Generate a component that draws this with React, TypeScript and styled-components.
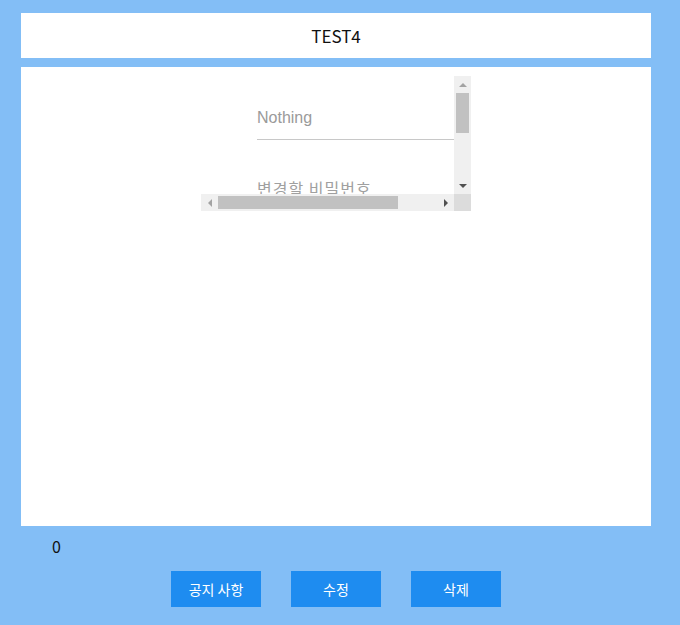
import styled, { createGlobalStyle } from "styled-components";

const GlobalStyle = createGlobalStyle`
  html, body {
    margin: 0;
    padding: 0;
    background-color: #83bef6;
    font-family: "Noto Sans CJK KR", "Open Sans", sans-serif;
  }
`;

const Page = styled.div`
  width: 630px;
  padding: 13px 29px 0 21px;
  display: flex;
  flex-direction: column;
`;

const TitleBar = styled.header`
  height: 45px;
  background-color: #fff;
  display: flex;
  align-items: center;
  justify-content: center;
  font-size: 17px;
  color: #111;
`;

const Board = styled.main`
  margin-top: 9px;
  height: 459px;
  background-color: #fff;
  display: flex;
  justify-content: center;
  padding-top: 9px;
  box-sizing: border-box;
`;

// scroll frame with classic scrollbars: view | v-bar / h-bar | corner
const ScrollFrame = styled.div`
  display: grid;
  grid-template-columns: 253px 17px;
  grid-template-rows: 118px 17px;
  width: 270px;
  height: 135px;
`;

const ScrollView = styled.div`
  overflow: hidden;
`;

const Bar = styled.div<{ $vertical?: boolean }>`
  display: flex;
  flex-direction: ${(p) => (p.$vertical ? "column" : "row")};
  background-color: #f0f0f0;
`;

const Track = styled.div<{ $vertical?: boolean }>`
  flex: 1;
  display: flex;
  flex-direction: ${(p) => (p.$vertical ? "column" : "row")};
  padding: ${(p) => (p.$vertical ? "0 2px" : "2px 0")};
`;

const Thumb = styled.div<{ $size: number; $vertical?: boolean }>`
  background-color: #c1c1c1;
  ${(p) => (p.$vertical ? `height: ${p.$size}px;` : `width: ${p.$size}px;`)}
  ${(p) => (p.$vertical ? "width: 13px;" : "height: 13px;")}
`;

const ArrowButton = styled.div`
  width: 17px;
  height: 17px;
  flex: none;
  display: flex;
  align-items: center;
  justify-content: center;
`;

type Dir = "up" | "down" | "left" | "right";

const Arrow = styled.span<{ $dir: Dir; $dim?: boolean }>`
  width: 0;
  height: 0;
  ${({ $dir, $dim }) => {
    const c = $dim ? "#a3a3a3" : "#505050";
    if ($dir === "up")
      return `border-left: 4px solid transparent; border-right: 4px solid transparent; border-bottom: 4px solid ${c};`;
    if ($dir === "down")
      return `border-left: 4px solid transparent; border-right: 4px solid transparent; border-top: 4px solid ${c};`;
    if ($dir === "left")
      return `border-top: 4px solid transparent; border-bottom: 4px solid transparent; border-right: 4px solid ${c};`;
    return `border-top: 4px solid transparent; border-bottom: 4px solid transparent; border-left: 4px solid ${c};`;
  }}
`;

const Corner = styled.div`
  background-color: #dcdcdc;
`;

const FormBody = styled.div`
  width: 308px;
  padding: 21px 0 20px 56px;
  box-sizing: border-box;
`;

const Field = styled.input`
  display: block;
  width: 252px;
  height: 42px;
  padding: 0;
  border: none;
  border-bottom: 1px solid #c8c8c8;
  outline: none;
  font-family: "Liberation Sans", Arial, sans-serif;
  font-size: 16px;
  color: #333;
  background: transparent;

  &::placeholder {
    color: #9a9a9a;
  }
`;

const FieldLabel = styled.label`
  display: block;
  margin-top: 36px;
  font-size: 16px;
  color: #a0a0a0;
  letter-spacing: 1px;
`;

const Counter = styled.div`
  height: 45px;
  padding: 0 0 6px 31px;
  box-sizing: border-box;
  display: flex;
  align-items: center;
  font-size: 16px;
  color: #111;
`;

const ButtonRow = styled.div`
  display: flex;
  justify-content: center;
  gap: 30px;
`;

const ActionButton = styled.button`
  width: 90px;
  height: 36px;
  border: none;
  background-color: #1e8cf0;
  color: #fff;
  font-family: "Noto Sans CJK KR", sans-serif;
  font-size: 14px;
  cursor: pointer;
`;

const App = () => {
  return (
    <>
      <GlobalStyle />
      <Page>
        <TitleBar>TEST4</TitleBar>
        <Board>
          <ScrollFrame>
            <ScrollView>
              <FormBody>
                <Field type="text" placeholder="Nothing" />
                <FieldLabel>변경할 비밀번호</FieldLabel>
                <Field type="password" />
              </FormBody>
            </ScrollView>
            <Bar $vertical>
              <ArrowButton>
                <Arrow $dir="up" $dim />
              </ArrowButton>
              <Track $vertical>
                <Thumb $vertical $size={40} />
              </Track>
              <ArrowButton>
                <Arrow $dir="down" />
              </ArrowButton>
            </Bar>
            <Bar>
              <ArrowButton>
                <Arrow $dir="left" $dim />
              </ArrowButton>
              <Track>
                <Thumb $size={180} />
              </Track>
              <ArrowButton>
                <Arrow $dir="right" />
              </ArrowButton>
            </Bar>
            <Corner />
          </ScrollFrame>
        </Board>
        <Counter>0</Counter>
        <ButtonRow>
          <ActionButton>공지 사항</ActionButton>
          <ActionButton>수정</ActionButton>
          <ActionButton>삭제</ActionButton>
        </ButtonRow>
      </Page>
    </>
  );
};

export default App;
